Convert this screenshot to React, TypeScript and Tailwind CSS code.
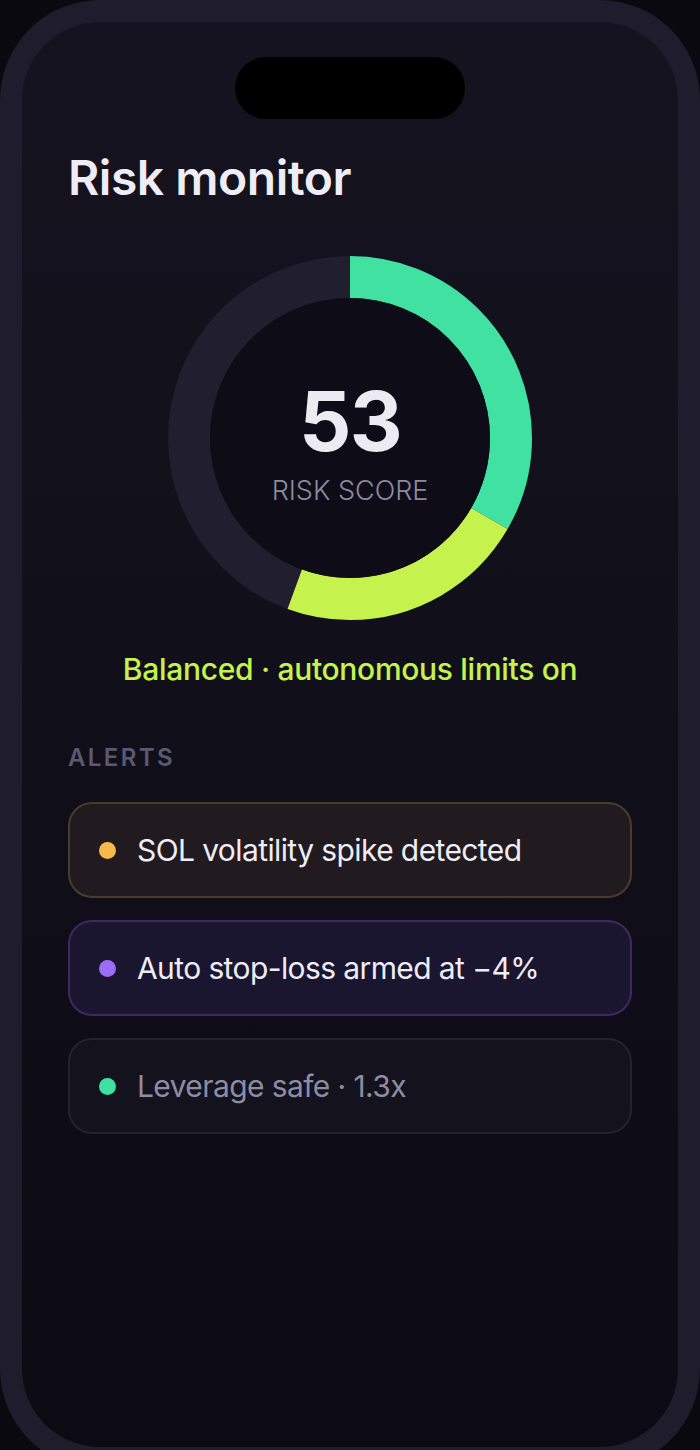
import React from 'react';

type Alert = {
    text: string;
    dot: string;
    card: string;
    tone: string;
};

const alerts: Alert[] = [
    { text: 'SOL volatility spike detected', dot: 'bg-[#f6b94b]', card: 'bg-[#211b20] border-[#4a3c2a]', tone: 'text-[#eeedf6]' },
    { text: 'Auto stop-loss armed at −4%', dot: 'bg-[#9b6cf6]', card: 'bg-[#1b1630] border-[#3a2c60]', tone: 'text-[#eeedf6]' },
    { text: 'Leverage safe · 1.3x', dot: 'bg-[#3fe0a1]', card: 'bg-[#14121d] border-[#25222f]', tone: 'text-[#8e8ca3]' },
];

// ring geometry (364px box)
const R = 161;
const C = 2 * Math.PI * R;
const green = (C * 120) / 360;
const lime = (C * 80) / 360;

const Gauge: React.FC = () => (
    <div className="mx-auto mt-[54px] grid w-[364px] h-[364px] place-items-center">
        <svg width="364" height="364" viewBox="0 0 364 364" className="[grid-area:1/1]">
            <circle cx="182" cy="182" r={R} fill="none" stroke="#211e2e" strokeWidth="42" />
            <g transform="rotate(-90 182 182)">
                <circle cx="182" cy="182" r={R} fill="none" stroke="#41e1a1" strokeWidth="42" strokeDasharray={`${green} ${C}`} />
                <circle cx="182" cy="182" r={R} fill="none" stroke="#c6f24d" strokeWidth="42" strokeDasharray={`${lime} ${C}`} strokeDashoffset={-green} />
            </g>
            <circle cx="182" cy="182" r="140" fill="#0e0d17" />
        </svg>
        <div className="[grid-area:1/1] flex flex-col items-center pt-[8px]">
            <span className="text-[82px] leading-none font-bold tracking-[-0.02em] text-[#ecebf2]">53</span>
            <span className="mt-[14px] text-[27px] leading-none font-light text-[#8b8aa0]">RISK SCORE</span>
        </div>
    </div>
);

export default function App() {
    return (
        <div className="w-[700px] h-[1450px] overflow-hidden bg-[#0a0910] [font-family:Inter,'Liberation_Sans',sans-serif]">
            <div className="w-[700px] h-[1469px] rounded-[100px] bg-[#1f1c2b] p-[22px]">
                <div className="h-full rounded-[78px] bg-linear-to-b from-[#15131f] to-[#0c0b14] px-[46px] pt-[35px]">
                    <div className="mx-auto h-[62px] w-[230px] rounded-full bg-black" />

                    <h1 className="mt-[35px] text-[48px] leading-none font-semibold tracking-[-0.01em] text-[#eeedf5]">Risk monitor</h1>

                    <Gauge />

                    <p className="mt-[34px] text-center text-[30px] leading-none font-medium tracking-[-0.01em] text-[#c6f24d]">
                        Balanced · autonomous limits on
                    </p>

                    <h2 className="mt-[62px] text-[24px] leading-none font-semibold tracking-[0.1em] text-[#5b5873]">ALERTS</h2>

                    <div className="mt-[32px] flex flex-col gap-[22px]">
                        {alerts.map((a) => (
                            <div key={a.text} className={`flex h-[96px] items-center gap-[21px] rounded-[24px] border-2 pl-[29px] ${a.card}`}>
                                <span className={`h-[17px] w-[17px] rounded-full ${a.dot}`} />
                                <span className={`text-[30px] leading-none tracking-[-0.02em] ${a.tone}`}>{a.text}</span>
                            </div>
                        ))}
                    </div>
                </div>
            </div>
        </div>
    );
}
